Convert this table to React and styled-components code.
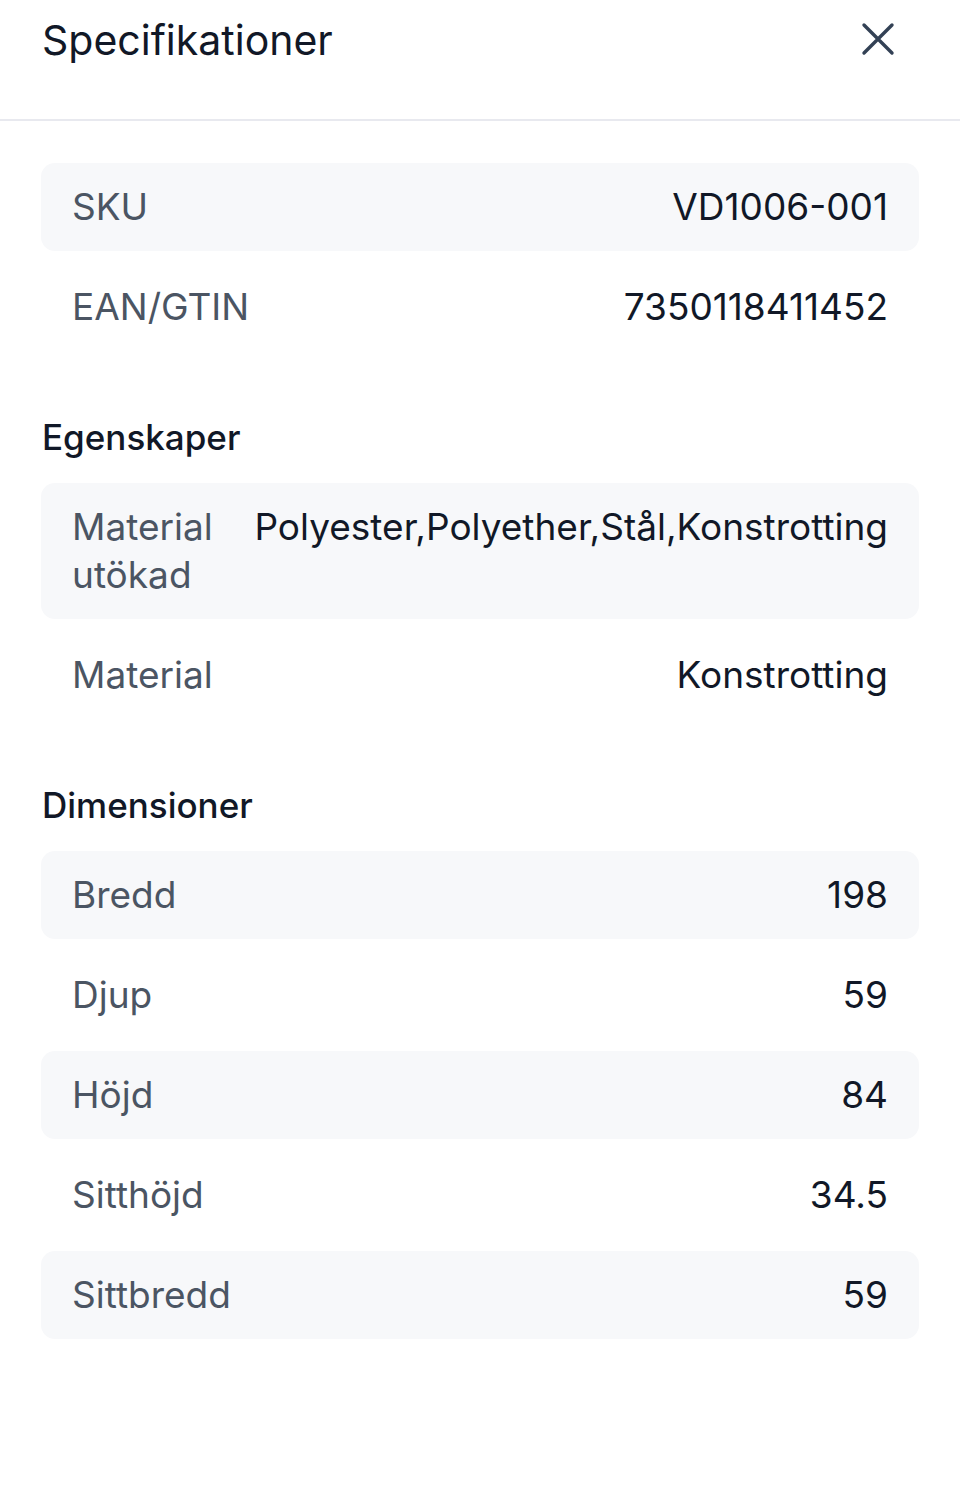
import React from "react";
import styled, { createGlobalStyle } from "styled-components";

const Global = createGlobalStyle`
  html, body { margin: 0; padding: 0; background: #ffffff; }
  body { font-family: Inter, "Noto Sans", sans-serif; -webkit-font-smoothing: antialiased; }
`;

const Page = styled.div`
  width: 960px;
  min-height: 1491px;
  background: #fff;
`;

const Header = styled.header`
  height: 121px;
  box-sizing: border-box;
  border-bottom: 2px solid #e8e9ef;
  display: flex;
  align-items: flex-start;
  justify-content: space-between;
  padding: 13px 65px 0 42px;
`;

const Title = styled.h1`
  margin: 0;
  font-size: 41px;
  line-height: 54px;
  font-weight: 400;
  color: #111827;
`;

const CloseButton = styled.button`
  border: 0;
  background: none;
  padding: 0;
  margin-top: 9px;
  width: 34px;
  height: 34px;
  display: flex;
  align-items: center;
  justify-content: center;
  cursor: pointer;
`;

const Content = styled.main`
  padding: 42px 41px 0 41px;
`;

const Section = styled.section`
  display: flex;
  flex-direction: column;
  gap: 12px;
  & + & { margin-top: 64px; }
`;

const SectionTitle = styled.h2`
  margin: 0 0 12px 1px;
  font-size: 35px;
  line-height: 44px;
  font-weight: 500;
  color: #111827;
`;

const Row = styled.div`
  display: flex;
  align-items: flex-start;
  justify-content: space-between;
  gap: 38px;
  min-height: 88px;
  box-sizing: border-box;
  padding: 20px 31px 20px 31px;
  border-radius: 14px;
  background: ${(p) => (p.$shaded ? "#f7f8fa" : "transparent")};
  font-size: 37px;
  line-height: 48px;
`;

const Label = styled.span`
  flex: 0 1 auto;
  color: #4b5563;
  font-weight: 400;
`;

const Value = styled.span`
  flex: 0 0 auto;
  white-space: nowrap;
  text-align: right;
  color: #111827;
  font-weight: 400;
`;

const sections = [
  {
    title: null,
    rows: [
      ["SKU", "VD1006-001"],
      ["EAN/GTIN", "7350118411452"],
    ],
  },
  {
    title: "Egenskaper",
    rows: [
      ["Material utökad", "Polyester,Polyether,Stål,Konstrotting"],
      ["Material", "Konstrotting"],
    ],
  },
  {
    title: "Dimensioner",
    rows: [
      ["Bredd", "198"],
      ["Djup", "59"],
      ["Höjd", "84"],
      ["Sitthöjd", "34.5"],
      ["Sittbredd", "59"],
    ],
  },
];

export default function App() {
  return (
    <Page>
      <Global />
      <Header>
        <Title>Specifikationer</Title>
        <CloseButton aria-label="Stäng">
          <svg width="34" height="34" viewBox="0 0 34 34" fill="none">
            <path
              d="M3 3 L31 31 M31 3 L3 31"
              stroke="#334155"
              strokeWidth="3.4"
              strokeLinecap="round"
            />
          </svg>
        </CloseButton>
      </Header>
      <Content>
        {sections.map((s, i) => (
          <Section key={i}>
            {s.title && <SectionTitle>{s.title}</SectionTitle>}
            {s.rows.map(([l, v], j) => (
              <Row key={l} $shaded={j % 2 === 0}>
                <Label>{l}</Label>
                <Value>{v}</Value>
              </Row>
            ))}
          </Section>
        ))}
      </Content>
    </Page>
  );
}
